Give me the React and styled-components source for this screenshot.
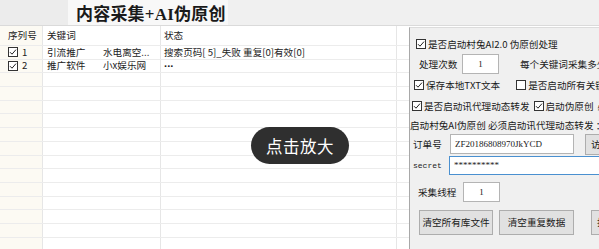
import React from "react";
import styled, { createGlobalStyle } from "styled-components";

const Global = createGlobalStyle`
  html, body { margin: 0; padding: 0; background: #fff; }
  body { width: 599px; height: 249px; overflow: hidden; font-family: "Noto Sans CJK SC", "Liberation Sans", sans-serif; }
`;

const Page = styled.div`
  position: relative;
  width: 599px;
  height: 249px;
  display: flex;
  flex-direction: column;
  overflow: hidden;
`;

const TopBar = styled.div`
  height: 25px;
  display: flex;
  background: #f0f0f0;
  border-bottom: 1px solid #dadada;
  flex-shrink: 0;
`;

const TabStub = styled.div`
  width: 68px;
  background: #ececec;
`;

const Title = styled.div`
  width: 160px;
  background: #f8f8f8;
  display: flex;
  align-items: center;
  padding-left: 8px;
  box-sizing: border-box;
  font-family: "Liberation Serif", "Noto Sans CJK SC", serif;
  font-size: 17px;
  font-weight: 700;
  color: #1a1a1a;
  letter-spacing: 0.2px;
`;

const Main = styled.div`
  flex: 1;
  display: flex;
  min-height: 0;
`;

const TableArea = styled.div`
  width: 409px;
  flex-shrink: 0;
  overflow: hidden;
  font-size: 9.6px;
  color: #222;
`;

const Row = styled.div`
  display: grid;
  grid-template-columns: 43px 118px 236px 12px;
  height: ${(p) => (p.$head ? "20px" : "13.7px")};
  border-bottom: 1px solid #ececec;
  box-sizing: border-box;
`;

const Cell = styled.div`
  display: flex;
  align-items: center;
  gap: 4px;
  padding-left: ${(p) => p.$pad || 4}px;
  border-right: ${(p) => (p.$last ? "none" : "1px solid #e6e6e6")};
  background: ${(p) => (p.$tint ? "#fcfaf3" : "transparent")};
  white-space: nowrap;
  overflow: hidden;
  line-height: 1;
`;

const KwText = styled.span`
  width: 52px;
  flex-shrink: 0;
`;

const Dots = styled.span`
  font-family: "Liberation Sans", sans-serif;
  font-size: 11px;
  font-weight: 700;
  letter-spacing: -0.5px;
`;

const Panel = styled.div`
  flex: 1;
  margin-top: 1px;
  background: #f0f0f0;
  border-left: 1px solid #a8a8a8;
  border-top: 1px solid #dcdcdc;
  overflow: hidden;
  padding-top: 7px;
  font-size: 9.6px;
  color: #1a1a1a;
  display: flex;
  flex-direction: column;
`;

const PRow = styled.div`
  display: flex;
  align-items: center;
  height: ${(p) => p.$h}px;
  padding-left: ${(p) => p.$pl || 0}px;
  margin-top: ${(p) => p.$mt || 0}px;
  gap: ${(p) => p.$gap || 0}px;
  white-space: nowrap;
  flex-shrink: 0;
`;

const Opt = styled.label`
  display: inline-flex;
  align-items: center;
  gap: 2px;
  margin-right: ${(p) => p.$mr || 0}px;
`;

const BoxEl = styled.span`
  display: inline-flex;
  align-items: center;
  justify-content: center;
  width: 10px;
  height: 10px;
  border: 1px solid #333;
  background: #fff;
  box-sizing: border-box;
  flex-shrink: 0;
`;

const Label = styled.span`
  width: ${(p) => (p.$w ? p.$w + "px" : "auto")};
  flex-shrink: 0;
  font-family: ${(p) => (p.$mono ? '"Liberation Mono", monospace' : "inherit")};
  font-size: ${(p) => (p.$mono ? "8px" : "inherit")};
`;

const Input = styled.div`
  width: ${(p) => p.$w}px;
  height: ${(p) => p.$h || 20}px;
  background: #fff;
  border: 1px solid ${(p) => (p.$focus ? "#4a90d0" : "#b4b4b4")};
  box-sizing: border-box;
  display: flex;
  align-items: center;
  justify-content: ${(p) => (p.$center ? "center" : "flex-start")};
  padding-left: ${(p) => (p.$center ? 0 : 4)}px;
  font-family: "Liberation Serif", "Noto Sans CJK SC", serif;
  font-size: 9px;
  flex-shrink: 0;
`;

const Btn = styled.div`
  width: ${(p) => p.$w}px;
  height: ${(p) => p.$h || 25}px;
  background: #e1e1e1;
  border: 1px solid #adadad;
  box-sizing: border-box;
  display: flex;
  align-items: center;
  justify-content: ${(p) => (p.$start ? "flex-start" : "center")};
  padding-left: ${(p) => (p.$start ? 5 : 0)}px;
  flex-shrink: 0;
  font-size: 9.6px;
`;

const Zoom = styled.div`
  position: absolute;
  left: 251px;
  top: 127px;
  width: 98px;
  height: 37px;
  border-radius: 19px;
  background: rgba(38, 38, 38, 0.96);
  color: #fff;
  font-size: 16.5px;
  display: flex;
  align-items: center;
  justify-content: center;
  letter-spacing: 0.5px;
`;

function Check({ on = true }) {
  return (
    <BoxEl>
      {on && (
        <svg width="8" height="8" viewBox="0 0 8 8">
          <path d="M1 4.2 L3 6.2 L7 1.6" fill="none" stroke="#222" strokeWidth="1" />
        </svg>
      )}
    </BoxEl>
  );
}

const rows = [
  { n: "1", kw: "引流推广", site: "水电离空...", st: "搜索页码[ 5]_失败 重复[0]有效[0]" },
  { n: "2", kw: "推广软件", site: "小x娱乐网", st: null },
];

export default function App() {
  const empties = Array.from({ length: 15 });
  return (
    <Page>
      <Global />
      <TopBar>
        <TabStub />
        <Title>内容采集+AI伪原创</Title>
      </TopBar>
      <Main>
        <TableArea>
          <Row $head>
            <Cell $pad={8} $tint>序列号</Cell>
            <Cell>关键词</Cell>
            <Cell $pad={3}>状态</Cell>
            <Cell $last />
          </Row>
          {rows.map((r) => (
            <Row key={r.n}>
              <Cell $pad={8} $tint>
                <Check />
                <span>{r.n}</span>
              </Cell>
              <Cell>
                <KwText>{r.kw}</KwText>
                <span>{r.site}</span>
              </Cell>
              <Cell $pad={3}>{r.st || <Dots>···</Dots>}</Cell>
              <Cell $last />
            </Row>
          ))}
          {empties.map((_, i) => (
            <Row key={i}>
              <Cell $tint />
              <Cell />
              <Cell />
              <Cell $last />
            </Row>
          ))}
        </TableArea>
        <Panel>
          <PRow $h={18} $pl={6}>
            <Opt>
              <Check />
              <span>是否启动村兔AI2.0 伪原创处理</span>
            </Opt>
          </PRow>
          <PRow $h={22} $pl={9}>
            <Label $w={43}>处理次数</Label>
            <Input $w={37} $center>1</Input>
            <Label style={{ marginLeft: 21 }}>每个关键词采集多少</Label>
          </PRow>
          <PRow $h={20} $pl={4}>
            <Opt $mr={16}>
              <Check />
              <span>保存本地TXT文本</span>
            </Opt>
            <Opt>
              <Check on={false} />
              <span>是否启动所有关键词</span>
            </Opt>
          </PRow>
          <PRow $h={22} $pl={2}>
            <Opt $mr={4}>
              <Check />
              <span>是否启动讯代理动态转发</span>
            </Opt>
            <Opt $mr={4}>
              <Check />
              <span>启动伪原创</span>
            </Opt>
            <span>必须</span>
          </PRow>
          <PRow $h={16}>
            <span>启动村兔AI伪原创 必须启动讯代理动态转发 ：</span>
          </PRow>
          <PRow $h={22} $pl={3}>
            <Label $w={37}>订单号</Label>
            <Input $w={124}>ZF20186808970JkYCD</Input>
            <Btn $w={30} $h={21} $start style={{ marginLeft: 11 }}>访问</Btn>
          </PRow>
          <PRow $h={20} $pl={3}>
            <Label $w={36} $mono>secret</Label>
            <Input $w={160} $h={19} $focus>**********</Input>
          </PRow>
          <PRow $h={22} $pl={8} $mt={6}>
            <Label $w={45}>采集线程</Label>
            <Input $w={37} $center>1</Input>
          </PRow>
          <PRow $h={26} $pl={9} $mt={6} $gap={6}>
            <Btn $w={74}>清空所有库文件</Btn>
            <Btn $w={75}>清空重复数据</Btn>
            <Btn $w={60} $start style={{ marginLeft: 11 }}>扫描</Btn>
          </PRow>
        </Panel>
      </Main>
      <Zoom>点击放大</Zoom>
    </Page>
  );
}
